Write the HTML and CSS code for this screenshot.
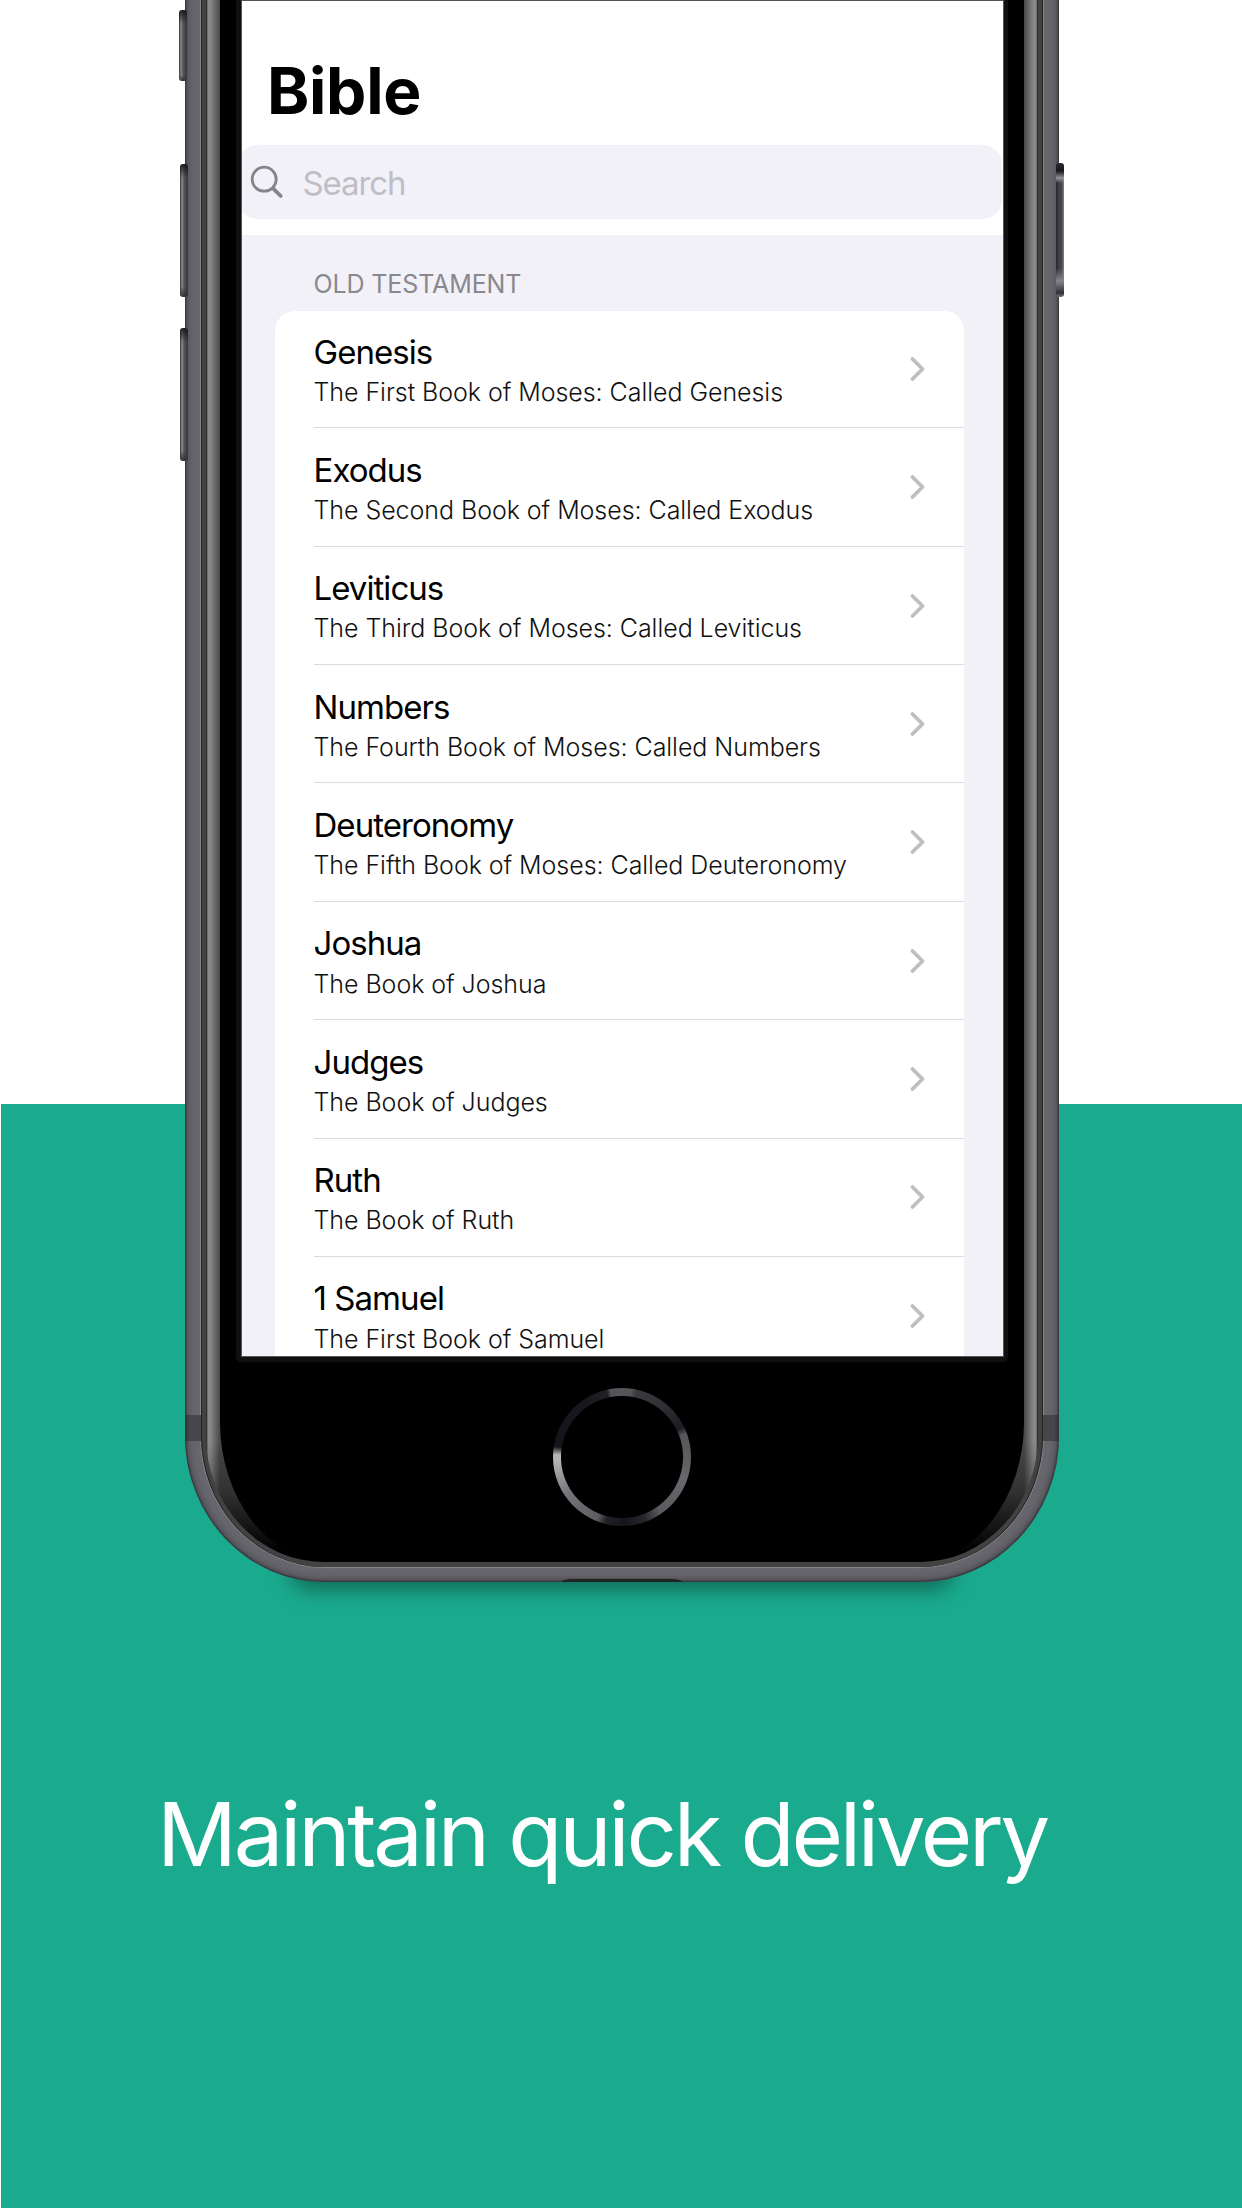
FILE: index.html
```html
<!DOCTYPE html>
<html lang="en">
<head>
<meta charset="utf-8">
<title>Bible</title>
<link rel="stylesheet" href="styles.css">
</head>
<body>
<svg class="defs" width="0" height="0" aria-hidden="true">
  <symbol id="chevron" viewBox="0 0 16 26"><path d="M2.5 3 12.5 13 2.5 23" fill="none" stroke="#bfbfc0" stroke-width="3.8" stroke-linecap="round" stroke-linejoin="round"/></symbol>
</svg>
<main class="poster">
  <div class="phone">
    <span class="side mute"></span>
    <span class="side up"></span>
    <span class="side down"></span>
    <span class="side power"></span>
    <div class="rim">
      <div class="bevel">
        <div class="glass">
          <div class="bezel">
            <div class="screen">
              <h1 class="title">Bible</h1>
              <div class="search">
                <svg class="search-icon" viewBox="0 0 34 34"><circle cx="14.2" cy="14.2" r="12" fill="none" stroke="#858489" stroke-width="2.8"/><path d="M23 23.3 30.7 31" fill="none" stroke="#858489" stroke-width="3.8" stroke-linecap="round"/></svg>
                <span class="search-text">Search</span>
              </div>
              <section class="list">
                <h2 class="label">OLD TESTAMENT</h2>
                <ul class="card">
                  <li class="row"><div class="item"><span class="name">Genesis</span><span class="sub">The First Book of Moses: Called Genesis</span></div><svg class="chev"><use href="#chevron"/></svg></li>
                  <li class="row"><div class="item"><span class="name">Exodus</span><span class="sub">The Second Book of Moses: Called Exodus</span></div><svg class="chev"><use href="#chevron"/></svg></li>
                  <li class="row"><div class="item"><span class="name">Leviticus</span><span class="sub">The Third Book of Moses: Called Leviticus</span></div><svg class="chev"><use href="#chevron"/></svg></li>
                  <li class="row"><div class="item"><span class="name">Numbers</span><span class="sub">The Fourth Book of Moses: Called Numbers</span></div><svg class="chev"><use href="#chevron"/></svg></li>
                  <li class="row"><div class="item"><span class="name">Deuteronomy</span><span class="sub">The Fifth Book of Moses: Called Deuteronomy</span></div><svg class="chev"><use href="#chevron"/></svg></li>
                  <li class="row"><div class="item"><span class="name">Joshua</span><span class="sub">The Book of Joshua</span></div><svg class="chev"><use href="#chevron"/></svg></li>
                  <li class="row"><div class="item"><span class="name">Judges</span><span class="sub">The Book of Judges</span></div><svg class="chev"><use href="#chevron"/></svg></li>
                  <li class="row"><div class="item"><span class="name">Ruth</span><span class="sub">The Book of Ruth</span></div><svg class="chev"><use href="#chevron"/></svg></li>
                  <li class="row"><div class="item"><span class="name">1 Samuel</span><span class="sub">The First Book of Samuel</span></div><svg class="chev"><use href="#chevron"/></svg></li>
                </ul>
              </section>
            </div>
          </div>
          <div class="home"></div>
        </div>
      </div>
    </div>
    <span class="band band-left"></span>
    <span class="band band-right"></span>
    <span class="port"></span>
  </div>
  <p class="caption">Maintain quick delivery</p>
</main>
</body>
</html>
```

FILE: styles.css
```css
* { box-sizing: border-box; }
body { margin: 0; font-family: Inter, "Liberation Sans", sans-serif; background: #fff; }
.defs { position: absolute; }
.poster {
  width: 1242px;
  height: 2208px;
  overflow: hidden;
  background: linear-gradient(#1aab8e, #1aab8e) 1px 1104px no-repeat #fff;
}

/* device */
.phone {
  position: relative;
  isolation: isolate;
  width: 874px;
  height: 1582px;
  margin-left: 185px;
  padding: 0 16px 15px;
  border-radius: 0 0 140px 140px / 0 0 146px 146px;
}
/* soft shadow under the device */
.phone::before {
  content: "";
  position: absolute;
  z-index: -2;
  left: 105px;
  right: 105px;
  bottom: -8px;
  height: 40px;
  border-radius: 30px;
  background: rgba(12, 65, 53, .6);
  filter: blur(10px);
}
.phone::after {
  content: "";
  position: absolute;
  z-index: -1;
  inset: -20px 0 0;
  border-radius: inherit;
  background: #68676e;
  box-shadow: inset 0 0 2px 1px #303034, inset 0 0 10px 2px #47464c;
}
.rim {
  height: 1567px;
  padding: 0 5px 5px;
  border-radius: 0 0 124px 124px / 0 0 131px 131px;
  background: #424242;
  box-shadow: inset 1px 0 #242424, inset -1px 0 #242424, 0 0 0 1px #85848b;
}
.bevel {
  height: 1562px;
  padding: 0 14px;
  border-radius: 0 0 118px 118px / 0 0 126px 126px;
  background: linear-gradient(transparent 1440px, rgba(0,0,0,.3) 1490px, #000 1552px),
    linear-gradient(90deg, #111 0, #8d8d8d 2px, #858585 5px, #484848 14px, #484848 818px, #858585 827px, #8d8d8d 830px, #111 832px);
}
.glass {
  display: flex;
  flex-direction: column;
  align-items: center;
  height: 1562px;
  border-radius: 0 0 110px 110px / 0 0 140px 140px;
  background: #000;
}
.bezel {
  width: 772px;
  height: 1362px;
  padding: 1px 5px 6px 6px;
  border-radius: 0 0 5px 5px;
  background: #101010;
}
.screen {
  display: flex;
  flex-direction: column;
  height: 1355px;
  overflow: hidden;
  background: #fff;
  box-shadow: 0 0 0 1px #555;
}
.home {
  width: 138px;
  height: 138px;
  margin-top: 26px;
  border-radius: 50%;
  background: radial-gradient(circle, #000 60.5px, transparent 61.5px),
    conic-gradient(#555459 0 8deg, #3b3a3e 12deg, #302f33 40deg, #1d1c21 64deg, #56555a 70deg, #68676c 110deg, #5b5a5f 145deg, #252429 160deg, #16151c 178deg, #222128 194deg, #5d5c61 202deg, #747378 235deg, #b5b4b6 268deg, #b5b4b6 272deg, #15141b 279deg, #18171e 325deg, #202025 347deg, #555459 350deg);
}

/* side keys and frame details */
.side {
  position: absolute;
  z-index: 1;
  border-radius: 3px;
  background: linear-gradient(rgba(20,20,25,.9), transparent 14px, transparent 92%, #333), linear-gradient(90deg, #333439, #8a8b91 2px, #55565d 4px, #36373d);
}
.mute { left: -6px; top: 10px; width: 8px; height: 71px; }
.up { left: -5px; top: 164px; width: 8px; height: 133px; }
.down { left: -5px; top: 328px; width: 8px; height: 133px; }
.power {
  left: 871px;
  top: 163px;
  width: 8px;
  height: 134px;
  background: linear-gradient(#2a2b30, #18191d 8px, #939398 15px, transparent 20px, transparent 105px, #858489 118px, #303137 130px, #77767b), linear-gradient(90deg, #25262b, #3e3f46 3px, #484950 6px, #88878c);
}
.band { position: absolute; top: 1415px; width: 16px; height: 26px; }
.band-left { left: 0; background: linear-gradient(90deg, #303136, #46474d 5px); }
.band-right { right: 0; background: linear-gradient(270deg, #303136, #46474d 5px); }
.port {
  position: absolute;
  left: 376px;
  bottom: 0;
  width: 122px;
  height: 4px;
  border-top: 1px solid #535257;
  border-radius: 12px 12px 0 0 / 4px 4px 0 0;
  background: #202522;
}

/* app screen */
.title {
  margin: 51.5px 0 0 25px;
  font-size: 64px;
  line-height: 76px;
  font-weight: 700;
  letter-spacing: -.3px;
}
.search {
  display: flex;
  align-items: center;
  flex: none;
  height: 74px;
  margin: 16.5px 1px 0 -4px;
  padding-left: 12px;
  border-radius: 20px;
  background: #f2f1f8;
}
.search-icon { width: 34px; height: 34px; margin-top: -1px; }
.search-text { margin: 2px 0 0 18.5px; font-size: 33px; line-height: 40px; letter-spacing: -1.1px; color: #bfbec4; }
.list { flex: none; margin-top: 16px; padding: 32px 39px 0 32.5px; background: #f2f1f8; }
.label {
  margin: 0 0 9.5px 39px;
  font-size: 25px;
  line-height: 34px;
  font-weight: 400;
  letter-spacing: -.12px;
  color: #89888e;
}
.card { margin: 0; padding: 0; list-style: none; border-radius: 20px 20px 0 0; background: #fff; }
.row {
  display: flex;
  height: 118.35px;
  padding: 21px 38.5px 0 39px;
  background: linear-gradient(#dcdcde, #dcdcde) 39px 100% / 100% 1.4px no-repeat;
}
.item { display: flex; flex: 1; flex-direction: column; gap: 3.3px; white-space: nowrap; }
.name { font-size: 33px; line-height: 40px; letter-spacing: -.95px; color: #000; }
.sub { font-size: 25px; line-height: 34px; font-weight: 300; letter-spacing: -.05px; color: #111; }
.chev { flex: none; width: 16px; height: 26px; margin-top: 24.5px; }

.caption {
  margin: 197px 0 0 157px;
  font-size: 88.5px;
  line-height: 110px;
  letter-spacing: -3.3px;
  white-space: nowrap;
  color: #fff;
}
```
